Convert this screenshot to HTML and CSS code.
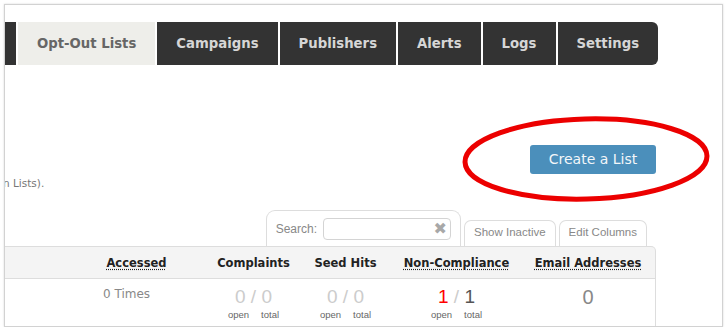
FILE: index.html
```html
<!DOCTYPE html>
<html lang="en">
<head>
	<meta charset="utf-8">
	<title>Opt-Out Lists</title>
	<link rel="stylesheet" href="styles.css">
</head>
<body>
<div class="frame">
	<ul class="nav">
		<li class="cut"></li>
		<li class="active">Opt-Out Lists</li>
		<li>Campaigns</li>
		<li>Publishers</li>
		<li>Alerts</li>
		<li>Logs</li>
		<li class="last">Settings</li>
	</ul>

	<div class="content">
		<div class="actions">
			<a href="javascript://" class="btn">Create a List</a>
		</div>
		<p class="note">n Lists).</p>

		<div class="tools">
			<div class="search">
				<label for="q">Search:</label>
				<span class="field">
					<input type="text" id="q">
					<span class="clear">&#10006;</span>
				</span>
			</div>
			<a href="javascript://" class="tool">Show Inactive</a>
			<a href="javascript://" class="tool">Edit Columns</a>
		</div>

		<div class="grid head">
			<div></div>
			<div><span class="abbr">Accessed</span></div>
			<div>Complaints</div>
			<div>Seed Hits</div>
			<div><span class="abbr">Non-Compliance</span></div>
			<div><span class="abbr">Email Addresses</span></div>
			<div></div>
		</div>
		<div class="grid row">
			<div></div>
			<div class="times">0 Times</div>
			<div class="stat">
				<div class="nums"><span>0</span> / <span>0</span></div>
				<div class="labels"><span>open</span><span>total</span></div>
			</div>
			<div class="stat">
				<div class="nums"><span>0</span> / <span>0</span></div>
				<div class="labels"><span>open</span><span>total</span></div>
			</div>
			<div class="stat">
				<div class="nums"><span class="bad">1</span> / <span class="dark">1</span></div>
				<div class="labels"><span>open</span><span>total</span></div>
			</div>
			<div class="stat">
				<div class="nums single">0</div>
			</div>
			<div></div>
		</div>
	</div>

	<svg class="circle" width="260" height="100" viewBox="0 0 260 100">
		<ellipse cx="124" cy="43" rx="121" ry="40" transform="rotate(-1.5 124 43)" fill="none" stroke="#ec0000" stroke-width="5"/>
	</svg>
</div>
</body>
</html>
```

FILE: styles.css
```css
body {
	margin: 0;
	background: #fff;
	font-family: "DejaVu Sans", sans-serif;
}

.frame {
	position: relative;
	margin: 4px 0 0 4px;
	width: 717px;
	height: 321px;
	border: 1px solid #d2d2d2;
	box-shadow: 0 0 2px rgba(0,0,0,0.15);
	overflow: hidden;
	background: #fff;
}

.nav {
	display: flex;
	gap: 2px;
	margin: 17px 0 0;
	padding: 0;
	list-style: none;
}

.nav li {
	height: 43px;
	line-height: 43px;
	padding: 0 19px;
	background: #333;
	color: #d6d6d6;
	font-size: 13.25px;
	font-weight: bold;
	white-space: nowrap;
}

.nav li.cut {
	width: 11px;
	padding: 0;
}

.nav li.active {
	background: #eeeeea;
	color: #666;
}

.nav li.last {
	border-radius: 0 6px 6px 0;
}

.content {
	margin-right: 66px;
}

.actions {
	display: flex;
	justify-content: flex-end;
	margin-top: 80px;
}

.btn {
	display: block;
	width: 126px;
	height: 29px;
	line-height: 29px;
	text-align: center;
	background: #4b8fbb;
	border-radius: 3px;
	color: #f2f6f9;
	font-size: 14px;
	text-decoration: none;
}

.note {
	margin: 3px 0 0 -2px;
	height: 12px;
	line-height: 12px;
	font-size: 10.5px;
	color: #777;
}

.tools {
	display: flex;
	justify-content: flex-end;
	align-items: flex-end;
	margin-top: 21px;
	padding-right: 9px;
	font-family: "Liberation Sans", sans-serif;
	font-size: 11px;
	color: #888;
}

.search {
	display: flex;
	align-items: center;
	gap: 6px;
	height: 35px;
	padding: 0 9px;
	border: 1px solid #ddd;
	border-bottom: none;
	border-radius: 9px 9px 0 0;
	margin-right: 0;
	font-size: 12px;
}

.field {
	position: relative;
	display: block;
}

.field input {
	display: block;
	box-sizing: border-box;
	width: 128px;
	height: 22px;
	margin: 0;
	border: 1px solid #d4d4d4;
	border-radius: 4px;
	outline: none;
}

.clear {
	position: absolute;
	right: 4px;
	top: 2px;
	color: #a8a8a8;
	font-size: 16px;
	line-height: 17px;
	font-family: "DejaVu Sans", sans-serif;
}

.tool {
	display: block;
	height: 25px;
	line-height: 22px;
	padding: 0 9px;
	margin-left: 3px;
	border: 1px solid #ddd;
	border-bottom: none;
	border-radius: 7px 7px 0 0;
	color: #888;
	font-size: 11.5px;
	text-decoration: none;
}

.grid {
	display: grid;
	grid-template-columns: 73px 117px 117px 67px 155px 108px 1fr;
	border-right: 1px solid #ddd;
}

.head {
	height: 31px;
	align-items: center;
	background: #f4f4f4;
	border-top: 1px solid #ddd;
	border-bottom: 1px solid #ddd;
	border-radius: 0 5px 0 0;
	text-align: center;
	font-size: 11.5px;
	font-weight: bold;
	color: #222;
}

.abbr {
	text-decoration: underline dotted;
	text-underline-offset: 2px;
}

.row {
	height: 50px;
}

.times {
	padding: 8px 0 0 25px;
	font-size: 12px;
	color: #888;
}

.stat {
	padding-top: 7px;
	text-align: center;
	font-family: "Liberation Sans", sans-serif;
}

.nums {
	height: 22px;
	line-height: 22px;
	font-size: 19px;
	color: #ccc;
}

.nums .bad {
	color: #f00;
}

.nums .dark {
	color: #555;
}

.nums.single {
	color: #888;
	font-size: 20px;
}

.labels {
	display: flex;
	justify-content: center;
	gap: 12px;
	margin-top: 1px;
	font-size: 9.5px;
	color: #666;
}

.circle {
	position: absolute;
	left: 457px;
	top: 111px;
}
```
